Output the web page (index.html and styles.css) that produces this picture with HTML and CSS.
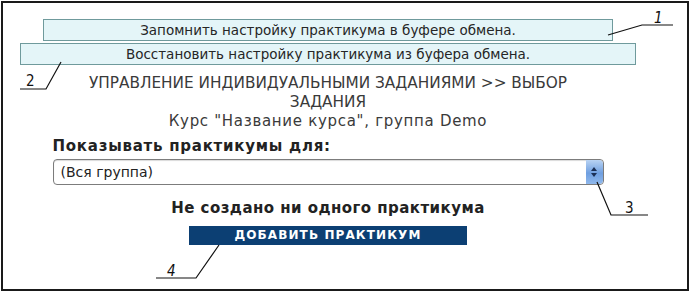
FILE: index.html
```html
<!DOCTYPE html>
<html lang="ru">
<head>
<meta charset="utf-8">
<title>Выбор задания</title>
<link rel="stylesheet" href="styles.css">
</head>
<body>
<div class="frame">
  <div class="column">
    <div class="clip-btn clip-save">Запомнить настройку практикума в буфере обмена.</div>
    <div class="clip-btn clip-restore">Восстановить настройку практикума из буфера обмена.</div>
    <div class="heading">
      <div class="crumbs">УПРАВЛЕНИЕ ИНДИВИДУАЛЬНЫМИ ЗАДАНИЯМИ &gt;&gt; ВЫБОР<br>ЗАДАНИЯ</div>
      <div class="course">Курс "Название курса", группа Demo</div>
    </div>
    <div class="filter">
      <div class="filter-label">Показывать практикумы для:</div>
      <div class="select">
        <span class="select-value">(Вся группа)</span>
        <span class="select-arrows">
          <svg width="8" height="12" viewBox="0 0 8 12"><path d="M4 1 L7 5 L1 5 Z M4 11 L7 7 L1 7 Z" fill="#1b2f55"/></svg>
        </span>
      </div>
    </div>
    <div class="empty">Не создано ни одного практикума</div>
    <div class="add-btn">ДОБАВИТЬ ПРАКТИКУМ</div>
  </div>
</div>
<svg class="callouts" width="690" height="294" viewBox="0 0 690 294">
  <g fill="none" stroke="#111" stroke-width="1.2">
    <polyline points="608,35 642,25 673,25"/>
    <polyline points="20,89 46,89 61,62"/>
    <polyline points="597,182 611,215 648,215"/>
    <polyline points="156,278 196,278 219,245"/>
  </g>
  <g class="num" fill="#111">
    <text x="654" y="23" class="slant">1</text>
    <text x="26" y="86">2</text>
    <text x="625" y="213">3</text>
    <text x="167" y="276" class="slant">4</text>
  </g>
</svg>
</body>
</html>
```
FILE: styles.css
```css
html, body {
  margin: 0;
  padding: 0;
  background: #fff;
}
body {
  position: relative;
  width: 690px;
  height: 294px;
  overflow: hidden;
  font-family: "DejaVu Sans", Verdana, sans-serif;
  color: #333;
}
.frame {
  margin: 1px 0 0 1px;
  width: 688px;
  height: 290px;
  border: 2px solid #1a1a1a;
  box-sizing: border-box;
  padding-top: 16px;
}
.column {
  margin-left: 17px;
  width: 616px;
  display: flex;
  flex-direction: column;
  align-items: center;
}
.clip-btn {
  box-sizing: border-box;
  height: 22px;
  background: #e4f5f8;
  border: 1px solid #6f9a9c;
  font-size: 13.5px;
  line-height: 20px;
  text-align: center;
  color: #262626;
}
.clip-save {
  width: 570px;
}
.clip-restore {
  width: 616px;
  margin-top: 2px;
}
.heading {
  margin-top: 9px;
  text-align: center;
  font-size: 15.3px;
  line-height: 19px;
  color: #3a3a3a;
}
.course {
  font-size: 15px;
  letter-spacing: 0.7px;
}
.filter {
  margin-top: 7px;
  width: 551px;
}
.filter-label {
  font-weight: bold;
  font-size: 15px;
  letter-spacing: 0.75px;
  line-height: 17px;
  color: #222;
}
.select {
  margin-top: 4px;
  box-sizing: border-box;
  height: 26px;
  border: 1px solid #7c7c7c;
  border-radius: 4px;
  display: flex;
  align-items: center;
  justify-content: space-between;
  padding-left: 7px;
  box-shadow: inset 0 1px 1px rgba(0,0,0,0.15);
}
.select-value {
  font-size: 14px;
  color: #222;
}
.select-arrows {
  width: 17px;
  height: 24px;
  border-radius: 0 4px 4px 0;
  background: linear-gradient(#b9d3f3, #6f9fe0 55%, #8fb8ec);
  display: flex;
  align-items: center;
  justify-content: center;
}
.empty {
  margin-top: 15px;
  font-weight: bold;
  font-size: 15px;
  letter-spacing: 0.45px;
  line-height: 17px;
  color: #222;
}
.add-btn {
  margin-top: 9px;
  width: 278px;
  height: 19px;
  box-sizing: border-box;
  background: #0c3f73;
  color: #fff;
  font-weight: bold;
  font-size: 12px;
  line-height: 19px;
  text-align: center;
  letter-spacing: 1.1px;
}
.callouts {
  position: absolute;
  left: 0;
  top: 0;
}
.num text {
  font-family: "DejaVu Sans Condensed", "Liberation Sans Narrow", "DejaVu Sans", sans-serif;
  font-size: 15px;
}
.num .slant {
  font-style: italic;
}
```
